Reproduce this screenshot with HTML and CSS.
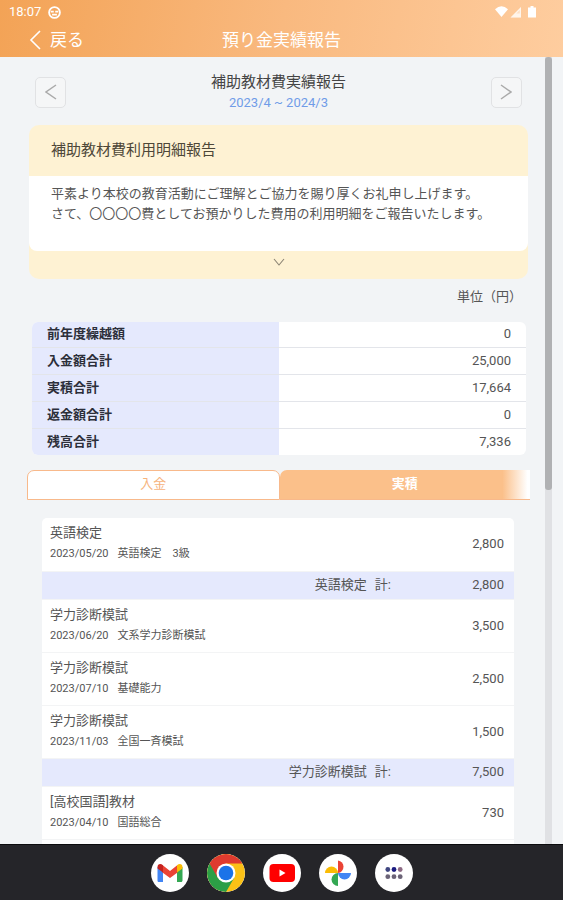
FILE: index.html
```html
<!DOCTYPE html>
<html lang="ja">
<head>
  <meta charset="UTF-8">
  <meta name="viewport" content="width=device-width, initial-scale=1">
  <title>預り金実績報告</title>
  <link rel="stylesheet" href="styles.css">
</head>
<body>
  <header class="app-header">
    <div class="status-bar">
      <span class="clock">18:07</span>
      <svg class="status-face" viewBox="0 0 14 14">
        <circle cx="7" cy="7" r="5.8" fill="none" stroke="#fff" stroke-width="2"/>
        <path d="M3 6h3.200M7.800 6H11M4.400 9.300h5.200" stroke="#fff" stroke-width="1.800"/>
      </svg>
      <svg class="status-icons" viewBox="0 0 42 14">
        <path d="M0 4.200Q6.500-1.500 13 4.200L6.500 12z" fill="#fff"/>
        <path d="M26 2v10.500H15.500z" fill="#fff" fill-opacity=".45"/>
        <path d="M26 2v10.500H15.500zM24.800 5v3.500h-3.500z" fill="#fff" fill-rule="evenodd" fill-opacity=".65"/>
        <path d="M35.500 1h3v1.500H41V12.500H33V2.500h2.500z" fill="#fff"/>
      </svg>
    </div>
    <div class="title-bar">
      <a class="back" href="#">
        <svg viewBox="0 0 12 20"><path d="M11 1L2 10l9 9" fill="none" stroke="#fff" stroke-width="1.6"/></svg>
        戻る
      </a>
      <h1>預り金実績報告</h1>
    </div>
  </header>

  <div class="viewport">
    <main class="content">
      <div class="period">
        <button class="arrow" aria-label="前へ">
          <svg viewBox="0 0 12 16"><path d="M11 1L1 8l10 7" fill="none" stroke="#aaa" stroke-width="1.5"/></svg>
        </button>
        <div class="period-text">
          <h2>補助教材費実績報告</h2>
          <p>2023/4 ~ 2024/3</p>
        </div>
        <button class="arrow" aria-label="次へ">
          <svg viewBox="0 0 12 16"><path d="M1 1l10 7L1 15" fill="none" stroke="#aaa" stroke-width="1.5"/></svg>
        </button>
      </div>

      <section class="notice">
        <h3>補助教材費利用明細報告</h3>
        <p>平素より本校の教育活動にご理解とご協力を賜り厚くお礼申し上げます。<br>さて、〇〇〇〇費としてお預かりした費用の利用明細をご報告いたします。</p>
        <button class="more" aria-label="続きを表示">
          <svg viewBox="0 0 12 8"><path d="M1 1l5 6 5-6" fill="none" stroke="#8a8373" stroke-width="1.1"/></svg>
        </button>
      </section>

      <p class="unit">単位（円）</p>

      <div class="summary">
        <table>
          <tr><th scope="row">前年度繰越額</th><td>0</td></tr>
          <tr><th scope="row">入金額合計</th><td>25,000</td></tr>
          <tr><th scope="row">実積合計</th><td>17,664</td></tr>
          <tr><th scope="row">返金額合計</th><td>0</td></tr>
          <tr><th scope="row">残高合計</th><td>7,336</td></tr>
        </table>
      </div>

      <div class="tabs">
        <button class="tab">入金</button>
        <button class="tab active">実積</button>
      </div>

      <div class="details">
        <table>
          <tr>
            <td class="item"><span class="name">英語検定</span><span class="sub"><time>2023/05/20</time>英語検定　3級</span></td>
            <td class="amount">2,800</td>
          </tr>
          <tr class="total"><td class="label"><span>英語検定</span><span>計:</span></td><td class="amount">2,800</td></tr>
          <tr>
            <td class="item"><span class="name">学力診断模試</span><span class="sub"><time>2023/06/20</time>文系学力診断模試</span></td>
            <td class="amount">3,500</td>
          </tr>
          <tr>
            <td class="item"><span class="name">学力診断模試</span><span class="sub"><time>2023/07/10</time>基礎能力</span></td>
            <td class="amount">2,500</td>
          </tr>
          <tr>
            <td class="item"><span class="name">学力診断模試</span><span class="sub"><time>2023/11/03</time>全国一斉模試</span></td>
            <td class="amount">1,500</td>
          </tr>
          <tr class="total"><td class="label"><span>学力診断模試</span><span>計:</span></td><td class="amount">7,500</td></tr>
          <tr>
            <td class="item"><span class="name">[高校国語]教材</span><span class="sub"><time>2023/04/10</time>国語総合</span></td>
            <td class="amount">730</td>
          </tr>
        </table>
      </div>
    </main>
    <div class="scrollbar"><div class="thumb"></div></div>
  </div>

  <nav class="dock">
    <a class="app" href="#" aria-label="Gmail">
      <svg viewBox="0 0 38 38">
        <path d="M6.500 13v13.500c0 1 .6 1.500 1.500 1.500h4V16z" fill="#4285f4"/>
        <path d="M26 16v12h4c.9 0 1.500-.6 1.500-1.500V13z" fill="#34a853"/>
        <path d="M11.500 11l7.500 6 7.500-6v7.500L19 24l-7.500-5.500z" fill="#ea4335"/>
        <path d="M6.500 13C6.500 10 9.500 9 12 11.300v7.200l-5.500-4z" fill="#c5221f"/>
        <path d="M26 11.300c2.500-2.300 5.500-1.300 5.500 1.700v1.500l-5.500 4z" fill="#fbbc04"/>
      </svg>
    </a>
    <a class="app" href="#" aria-label="Chrome">
      <svg viewBox="0 0 38 38">
        <circle cx="19" cy="19" r="19" fill="#fbc116"/>
        <path d="M19 19L2.550 9.500A19 19 0 0 0 19 38l8.200-14.300z" fill="#2c9f46"/>
        <path d="M2.550 9.500A19 19 0 0 1 35.450 9.500H19l-8.300 14.300z" fill="#df3b2f"/>
        <circle cx="19" cy="19" r="9.500" fill="#fff"/>
        <circle cx="19" cy="19" r="7.300" fill="#1b73e8"/>
      </svg>
    </a>
    <a class="app" href="#" aria-label="YouTube">
      <svg viewBox="0 0 38 38">
        <rect x="6.500" y="10" width="25.500" height="18" rx="4" fill="#f00"/>
        <path d="M16.500 15.500v7l6-3.500z" fill="#fff"/>
      </svg>
    </a>
    <a class="app" href="#" aria-label="フォト">
      <svg viewBox="0 0 38 38">
        <path d="M19 19V6.500a6.300 6.300 0 0 1 0 12.500z" fill="#ea4335"/>
        <path d="M19 19h13a6.400 6.400 0 0 1-13 0z" fill="#4285f4"/>
        <path d="M19 19v13a6.400 6.400 0 0 1 0-13z" fill="#34a853"/>
        <path d="M19 19H6a6.400 6.400 0 0 1 13 0z" fill="#fbbc04"/>
      </svg>
    </a>
    <a class="app" href="#" aria-label="すべてのアプリ">
      <svg viewBox="0 0 38 38">
        <g fill="#6b6377">
          <circle cx="12.800" cy="15.500" r="2.400" fill="#3f4680"/>
          <circle cx="19" cy="15.500" r="2.400" fill="#1c1c80"/>
          <circle cx="25.200" cy="15.500" r="2.400" fill="#8d6a84"/>
          <circle cx="12.800" cy="22.700" r="2.400"/>
          <circle cx="19" cy="22.700" r="2.400"/>
          <circle cx="25.200" cy="22.700" r="2.400"/>
        </g>
      </svg>
    </a>
  </nav>
</body>
</html>
```

FILE: styles.css
```css
* { box-sizing: border-box; }
body { font-family: Roboto, "Noto Sans CJK JP", sans-serif; font-size: 13px; line-height: 20px; color: #555; background: #f2f4f6; margin: 0; height: 100vh; display: flex; flex-direction: column; }
h1, h2, h3, p { margin: 0; font-weight: normal; }
svg { display: block; }
button { font: inherit; color: inherit; padding: 0; cursor: pointer; }
table { width: 100%; border-collapse: collapse; }

/* header */
.app-header { flex: none; background: linear-gradient(100deg, #f3a356, #f9b97f 50%, #fecd9f); color: #fff; padding-bottom: 1px; }
.status-bar { display: flex; align-items: center; gap: 7px; height: 24px; padding: 0 26px 0 9px; }
.status-face { width: 13px; height: 13px; }
.status-icons { width: 42px; height: 14px; margin-left: auto; }
.title-bar { display: grid; grid-template-columns: 1fr auto 1fr; align-items: center; height: 32px; padding: 0 29px; font-size: 17px; }
.title-bar h1 { font-size: 17px; }
.back { display: flex; align-items: center; gap: 9px; color: #fff; text-decoration: none; }
.back svg { width: 12px; height: 20px; }

/* scroll area */
.viewport { flex: 1; min-height: 0; overflow: hidden; display: flex; padding-right: 11px; }
.content { flex: 1; padding: 14px 17px 0 29px; }
.scrollbar { width: 7px; background: #e0e1e4; }
.thumb { height: 55%; background: #b0b1b3; border-radius: 3px; }

/* period */
.period { display: flex; align-items: center; justify-content: space-between; padding: 0 6px; }
.period-text { text-align: center; }
.period h2 { font-size: 15px; line-height: 22px; color: #444; }
.period p { color: #709ce8; }
.arrow { width: 31px; height: 31px; display: flex; align-items: center; justify-content: center; background: #f5f6f7; border: 1px solid #e1e2e4; border-radius: 5px; }
.arrow svg { width: 12px; height: 16px; }

/* notice */
.notice { margin-top: 12px; background: #fef2d3; border-radius: 10px; overflow: hidden; }
.notice h3 { font-size: 15px; line-height: 51px; padding: 0 22px; color: #4d4738; }
.notice p { background: #fff; padding: 8px 22px 27px; border-radius: 0 0 8px 8px; }
.more { display: flex; justify-content: center; width: 100%; height: 28px; padding-top: 7px; background: none; border: none; }
.more svg { width: 12px; height: 8px; }

.unit { margin-top: 8px; padding-right: 6px; text-align: right; }

/* summary */
.summary { margin: 15px 2px 0 3px; background: #fff; border-radius: 6px; overflow: hidden; }
.summary tr { height: 27px; }
.summary tr:first-child { height: 25px; }
.summary tr + tr { border-top: 1px solid #e3e5ea; }
.summary th { width: 50%; padding: 0 15px; text-align: left; background: #e5e9fd; color: #2c2f3a; line-height: 18px; }
.summary td { padding: 0 15px; text-align: right; line-height: 18px; }

/* tabs */
.tabs { display: flex; margin: 15px -2px 0; }
.tab { flex: 1; height: 30px; padding-bottom: 2px; background: #fff; color: #f6b37c; border: 1px solid #f8b98b; border-radius: 7px 7px 0 0; }
.tab.active { color: #fff; font-weight: bold; background: linear-gradient(to right, #fbc08a 89%, #fff 99%); border-width: 0 0 1px; border-radius: 7px 0 0 0; }

/* details */
.details { margin: 18px 14px 0 13px; padding-bottom: 53px; background: #fff; border-radius: 5px; overflow: hidden; }
.details tr { height: 53px; border-bottom: 1px solid #f3f4f5; }
.details td { padding: 0; }
.details .item { padding-left: 8px; }
.details .amount { width: 110px; padding-right: 10px; text-align: right; }
.details .total { height: 28px; background: #e5e9fd; }
.name, .sub { display: block; }
.sub { font-size: 11px; line-height: 22px; }
.sub time { margin-right: 9px; }
.label { text-align: right; }
.label span + span { margin-left: 8px; }
.details .label { padding-right: 13px; }

/* dock */
.dock { flex: none; display: flex; justify-content: center; align-items: center; gap: 18px; height: 56px; background: #252529; border-top: 1px solid #0c0c0e; }
.app { width: 38px; height: 38px; border-radius: 50%; background: #fff; overflow: hidden; }
```
